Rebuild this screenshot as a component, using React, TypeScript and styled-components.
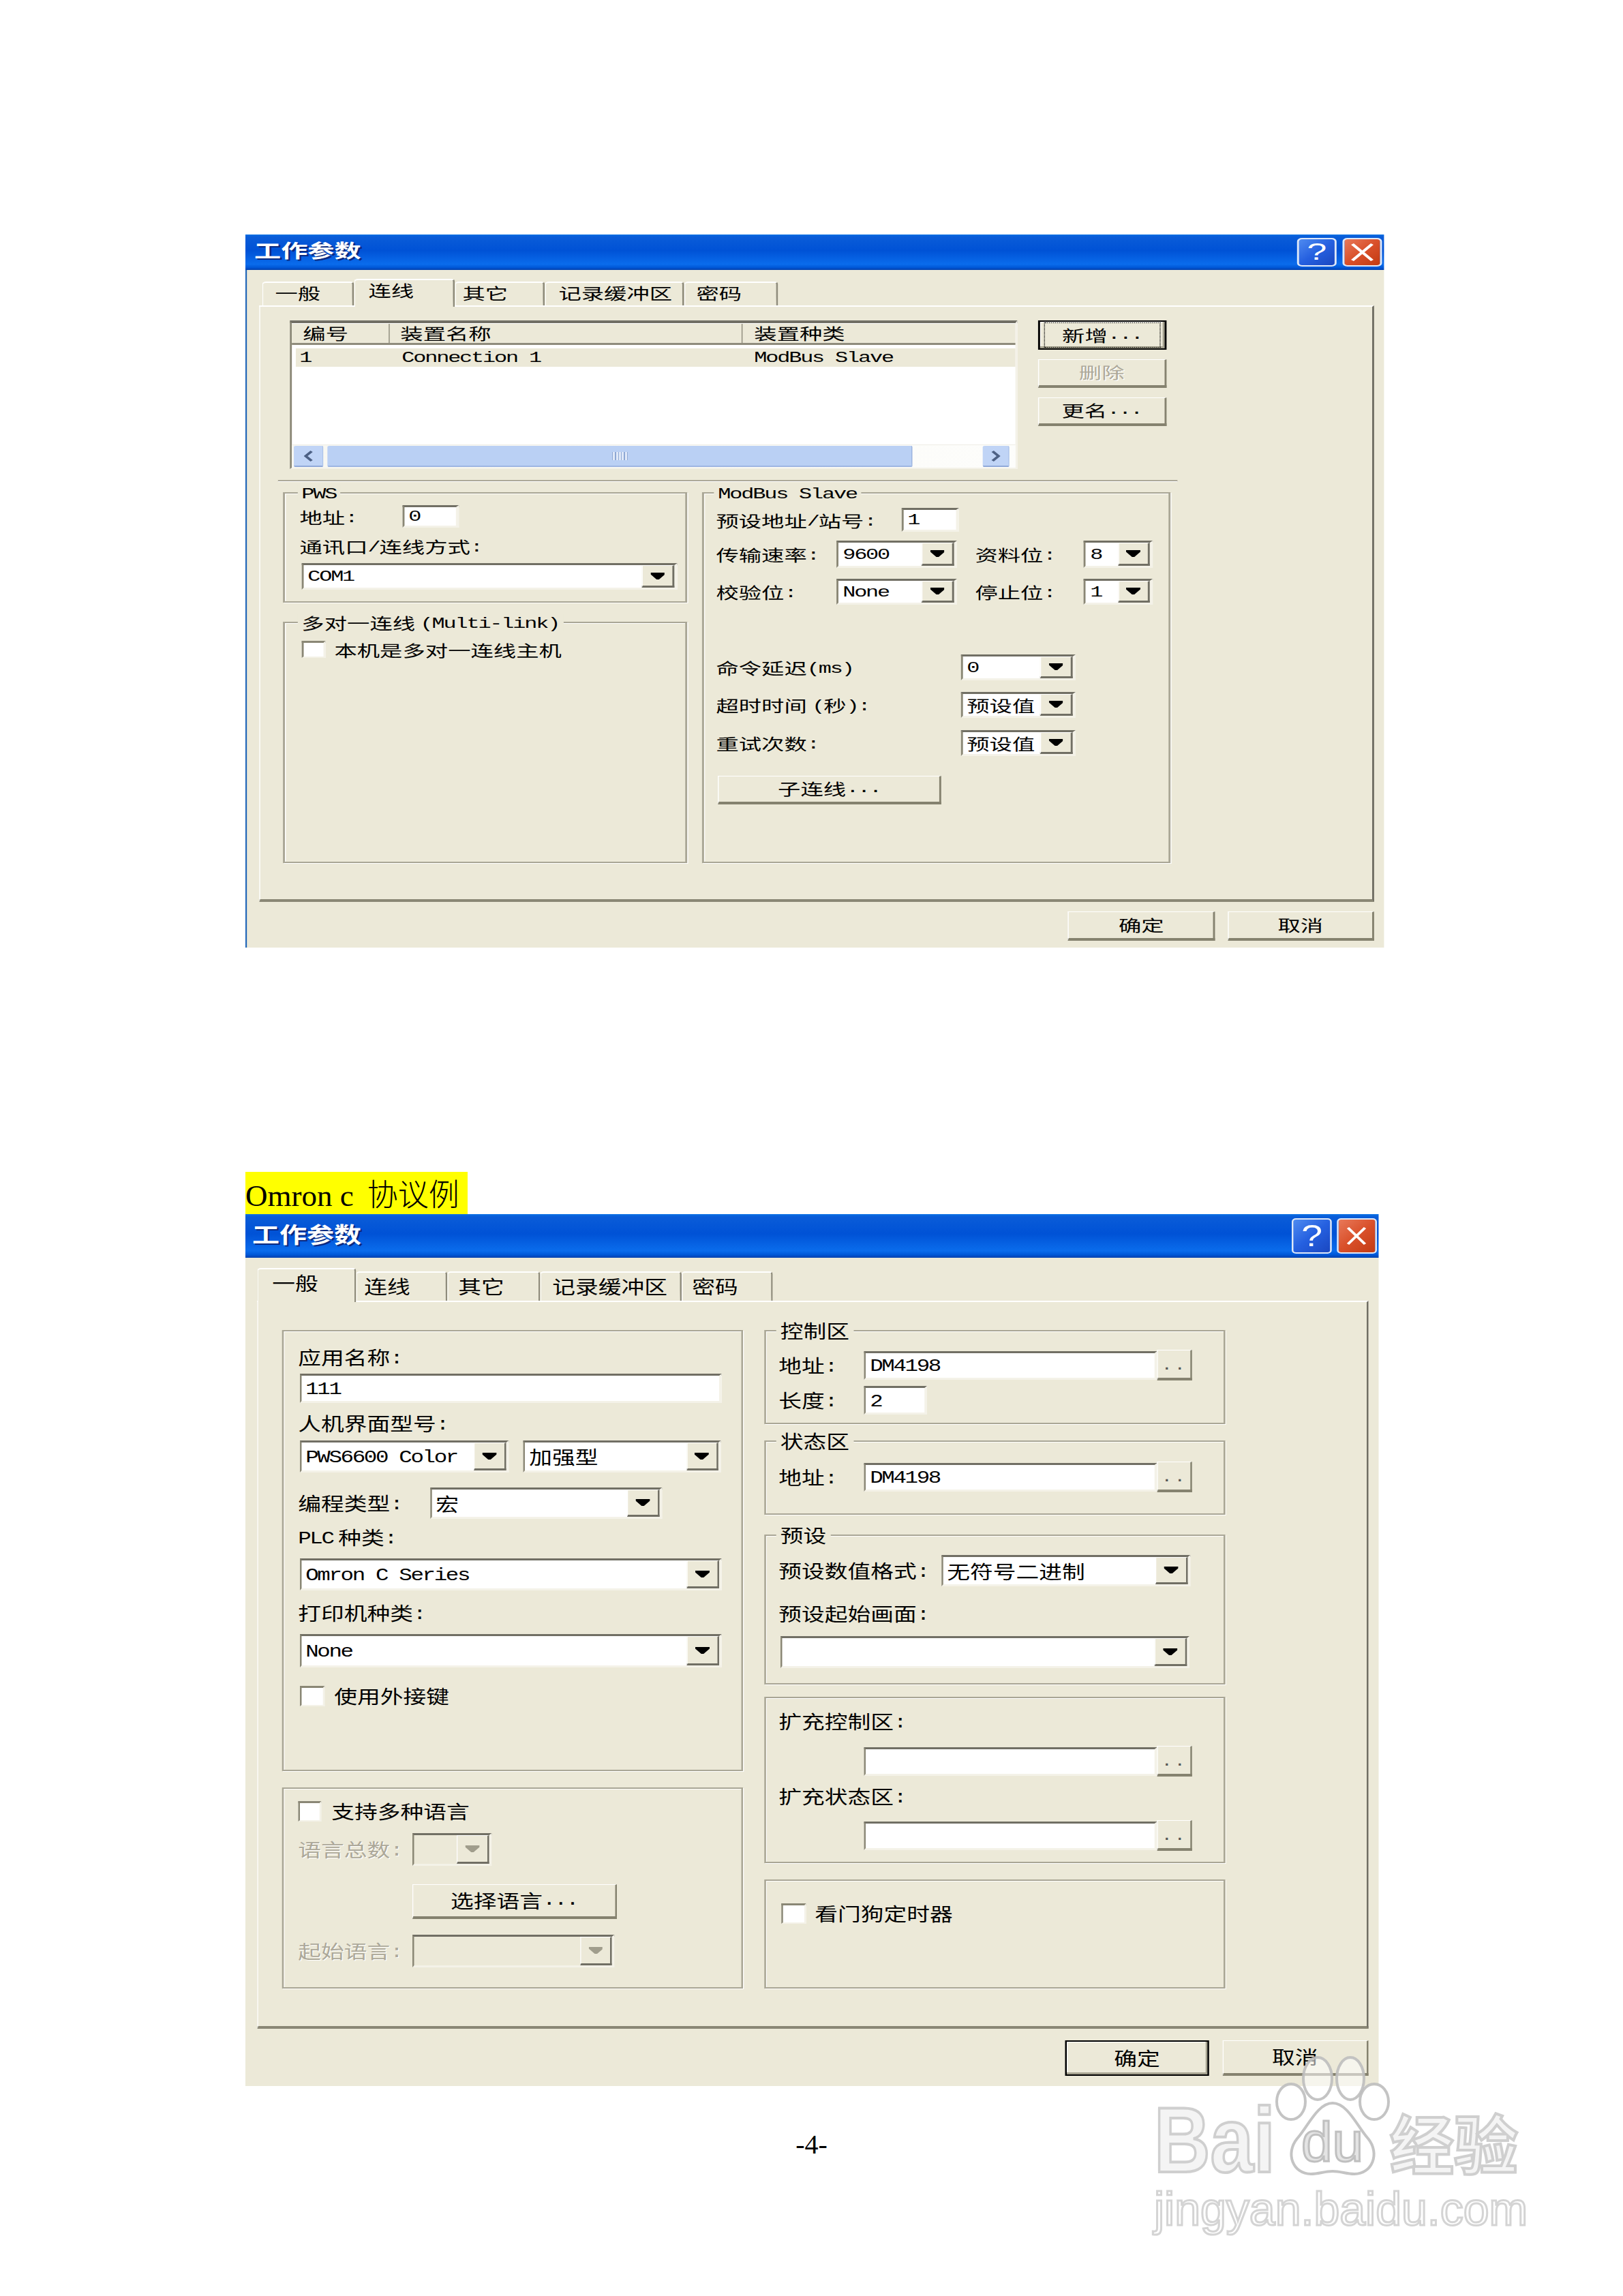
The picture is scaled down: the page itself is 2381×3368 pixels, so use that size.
import React, { FC, ReactNode } from 'react';
import styled, { createGlobalStyle, ThemeProvider } from 'styled-components';

// The two dialogs were pasted stretched: each is laid out at its own width and scaled in x.
// Every horizontal size below is given in page pixels and divided by theme.sx.
const hx = (px: number, theme: any) => `${px / theme.sx}px`;

const topDialog = { sx: 1.45, font: 23, latin: 22, track: -1.5, title: 27, legend: 24, tabTop: 3, titlePad: 13 };
const bottomDialog = { sx: 1.25, font: 27, latin: 26, track: -1.9, title: 32, legend: 30, tabTop: 6, titlePad: 10 };

const GlobalStyle = createGlobalStyle`
  html, body { margin: 0; padding: 0; background: #fff; }
  * { box-sizing: border-box; }
`;

const Page = styled.div`
  position: relative;
  width: 2381px;
  height: 3368px;
  padding-top: 344px;
  overflow: hidden;
  background: #fff;
`;

const DialogFrame = styled.div<{ $w: number }>`
  width: ${({ $w, theme }) => hx($w, theme)};
  margin-left: 360px;
  transform: scaleX(${({ theme }) => theme.sx});
  transform-origin: 0 0;
  color: #000;
  font-family: 'Noto Sans CJK SC', sans-serif;
  font-size: ${({ theme }) => theme.font}px;
  line-height: 1;
`;

const TitleBar = styled.div<{ $h: number; $gap: number }>`
  height: ${({ $h }) => $h}px;
  display: flex;
  align-items: center;
  gap: ${({ $gap, theme }) => hx($gap, theme)};
  padding: 0 ${({ theme }) => hx(2, theme)} 0 ${({ theme }) => hx(theme.titlePad, theme)};
  background: linear-gradient(
    180deg,
    #0a72e6 0%,
    #0a5cd8 6%,
    #0052d6 45%,
    #0a6cec 84%,
    #0058d8 93%,
    #0040ad 100%
  );
`;

const TitleText = styled.div`
  flex: 1;
  padding-bottom: 8px;
  color: #fff;
  font-size: ${({ theme }) => theme.title}px;
  font-weight: 700;
  text-shadow: 2px 2px 0 #0b2a80;
`;

const CaptionButton = styled.div<{ $w: number; $h: number; $close?: boolean }>`
  width: ${({ $w, theme }) => hx($w, theme)};
  height: ${({ $h }) => $h}px;
  display: flex;
  align-items: center;
  justify-content: center;
  border: 2px solid #dfe8f8;
  border-radius: 5px;
  color: #fff;
  font-family: 'Liberation Sans', sans-serif;
  font-size: ${({ $h }) => $h * 0.85}px;
  background: ${({ $close }) =>
    $close
      ? 'linear-gradient(135deg, #e8795a 0%, #d9502a 50%, #c23a12 100%)'
      : 'linear-gradient(135deg, #4f8bf0 0%, #2560e0 50%, #1a47c0 100%)'};
`;

const Body = styled.div<{ $blue?: boolean; $pl: number; $pr: number; $pt: number }>`
  background: #ece9d8;
  padding: ${({ $pt }) => $pt}px ${({ $pr, theme }) => hx($pr, theme)} 0
    ${({ $pl, theme }) => hx($pl, theme)};
  ${({ $blue }) => ($blue ? 'box-shadow: inset 1.5px 0 0 #1f66b8;' : '')}
`;

const TabStrip = styled.div<{ $h: number; $ml: number }>`
  height: ${({ $h }) => $h}px;
  display: flex;
  align-items: flex-end;
  margin-left: ${({ $ml, theme }) => hx($ml, theme)};
`;

const Tab = styled.div<{ $w: number; $pl: number; $active?: boolean; $h: number }>`
  position: relative;
  z-index: ${({ $active }) => ($active ? 1 : 0)};
  width: ${({ $w, theme }) => hx($w, theme)};
  height: ${({ $h }) => $h}px;
  margin-bottom: ${({ $active }) => ($active ? -2 : 0)}px;
  padding-left: ${({ $pl, theme }) => hx($pl, theme)};
  padding-top: ${({ theme }) => theme.tabTop}px;
  background: #ece9d8;
  border-style: solid;
  border-width: 2px 2px 0 1px;
  border-color: #fff #8f8c7c #fff #fff;
  border-radius: 4px 4px 0 0;
  white-space: nowrap;
`;

const TabPane = styled.div<{ $h: number; $pt: number; $pl: number }>`
  height: ${({ $h }) => $h}px;
  padding: ${({ $pt }) => $pt}px 0 0 ${({ $pl, theme }) => hx($pl, theme)};
  border-style: solid;
  border-width: 2px 2px 4px 1px;
  border-color: #fff #716f64 #8a8775 #fff;
`;

const Row = styled.div<{ $mt?: number; $ml?: number; $gap?: number; $h?: number; $top?: boolean }>`
  display: flex;
  align-items: ${({ $top }) => ($top ? 'flex-start' : 'center')};
  margin-top: ${({ $mt }) => $mt || 0}px;
  margin-left: ${({ $ml, theme }) => hx($ml || 0, theme)};
  gap: ${({ $gap, theme }) => hx($gap || 0, theme)};
  ${({ $h }) => ($h ? `height: ${$h}px;` : '')}
`;

const Column = styled.div<{ $gap?: number; $w?: number }>`
  display: flex;
  flex-direction: column;
  gap: ${({ $gap }) => $gap || 0}px;
  ${({ $w, theme }) => ($w ? `width: ${hx($w, theme)};` : '')}
`;

const Separator = styled.div<{ $mt: number; $ml: number; $w: number }>`
  width: ${({ $w, theme }) => hx($w, theme)};
  height: 3px;
  margin: ${({ $mt }) => $mt}px 0 0 ${({ $ml, theme }) => hx($ml, theme)};
  background: #aca899;
  border-bottom: 1px solid #fff;
`;

const Group = styled.div<{ $w: number; $h: number; $pl: number; $mt?: number }>`
  width: ${({ $w, theme }) => hx($w, theme)};
  height: ${({ $h }) => $h}px;
  margin-top: ${({ $mt }) => $mt || 0}px;
  padding-left: ${({ $pl, theme }) => hx($pl, theme)};
  border: 2px solid #a9a695;
  box-shadow: 1px 1px 0 #fff, inset 1px 1px 0 #fff;
`;

const Legend = styled.div`
  width: fit-content;
  height: ${({ theme }) => theme.legend}px;
  line-height: ${({ theme }) => theme.legend}px;
  margin-top: ${({ theme }) => -(theme.legend / 2 + 1)}px;
  margin-left: ${({ theme }) => hx(-6, theme)};
  padding: 0 ${({ theme }) => hx(6, theme)};
  background: #ece9d8;
  white-space: nowrap;
`;

const Latin = styled.span`
  font-family: 'Liberation Mono', monospace;
  font-size: ${({ theme }) => theme.latin}px;
  letter-spacing: ${({ theme }) => theme.track}px;
  vertical-align: 2px;
`;

const Colon = <Latin>:</Latin>;

const Label = styled.div<{ $w?: number; $off?: boolean; $mt?: number }>`
  ${({ $w, theme }) => ($w ? `width: ${hx($w, theme)};` : '')}
  flex-shrink: 0;
  height: ${({ theme }) => theme.legend}px;
  line-height: ${({ theme }) => theme.legend}px;
  margin-top: ${({ $mt }) => $mt || 0}px;
  text-indent: -2px;
  white-space: nowrap;
  ${({ $off }) => ($off ? 'color: #aca899; text-shadow: 1px 1px 0 #fff;' : '')}
`;

const Sunken = styled.div<{ $w: number; $h: number; $off?: boolean }>`
  width: ${({ $w, theme }) => hx($w, theme)};
  height: ${({ $h }) => $h}px;
  flex-shrink: 0;
  display: flex;
  align-items: center;
  background: ${({ $off }) => ($off ? '#ece9d8' : '#fff')};
  border-style: solid;
  border-width: 3px 3px 3px 2px;
  border-color: #716f64 #f4f2e8 #f4f2e8 #8a8775;
`;

const FieldValue = styled.div`
  flex: 1;
  padding-left: ${({ theme }) => hx(6, theme)};
  white-space: nowrap;
`;

const ComboArrow = styled.div<{ $off?: boolean }>`
  width: ${({ theme }) => hx(47, theme)};
  height: 100%;
  flex-shrink: 0;
  display: flex;
  align-items: center;
  justify-content: center;
  background: #ece9d8;
  border-style: solid;
  border-width: 1px 2px 3px 1px;
  border-color: #fff #716f64 #716f64 #fff;
  color: ${({ $off }) => ($off ? '#a09d8c' : '#000')};
`;

const ArrowSvg = styled.svg`
  width: ${({ theme }) => hx(21, theme)};
  height: 10px;
`;

const Raised = styled.div<{ $w: number; $h: number; $default?: boolean; $off?: boolean }>`
  width: ${({ $w, theme }) => hx($w, theme)};
  height: ${({ $h }) => $h}px;
  flex-shrink: 0;
  display: flex;
  align-items: center;
  justify-content: center;
  padding-bottom: 2px;
  background: #ece9d8;
  white-space: nowrap;
  border-style: solid;
  ${({ $default }) =>
    $default
      ? 'border-width: 2px; border-color: #000; box-shadow: inset -2px -3px 0 #a5a28f, inset 1px 1px 0 #fff;'
      : 'border-width: 1px 2px 4px 1px; border-color: #fff #85826f #85826f #fff;'}
  ${({ $off }) => ($off ? 'color: #aca899; text-shadow: 1px 1px 0 #fff;' : '')}
`;

const FocusRing = styled.div`
  width: 100%;
  height: 100%;
  margin: 3px 4px 1px;
  display: flex;
  align-items: center;
  justify-content: center;
  border: 1px dotted #000;
`;

const BrowseDots = styled.span`
  align-self: flex-end;
  margin-bottom: 4px;
  color: #555;
  letter-spacing: 2px;
  font-family: 'Liberation Mono', monospace;
  font-size: ${({ theme }) => theme.latin - 4}px;
`;

const CheckBox = styled.div<{ $w: number; $h: number }>`
  width: ${({ $w, theme }) => hx($w, theme)};
  height: ${({ $h }) => $h}px;
  flex-shrink: 0;
  background: #fff;
  border-style: solid;
  border-width: 3px 2px 2px 2px;
  border-color: #8a8775 #f4f2e8 #f4f2e8 #8a8775;
`;

// list control of the first dialog
const ListBox = styled.div<{ $w: number; $h: number }>`
  width: ${({ $w, theme }) => hx($w, theme)};
  height: ${({ $h }) => $h}px;
  display: flex;
  flex-direction: column;
  background: #fff;
  border-style: solid;
  border-width: 4px 2px 2px 2px;
  border-color: #716f64 #f4f2e8 #f4f2e8 #8a8775;
`;

const ListHeader = styled.div`
  height: 32px;
  display: flex;
  background: #ece9d8;
  border-top: 1px solid #fff;
  border-bottom: 3px solid #8f8c7c;
`;

const HeaderCell = styled.div<{ $w?: number; $pl: number }>`
  ${({ $w, theme }) => ($w ? `width: ${hx($w, theme)};` : 'flex: 1;')}
  padding-left: ${({ $pl, theme }) => hx($pl, theme)};
  line-height: 27px;
  border-right: ${({ $w }) => ($w ? '1px solid #8f8c7c' : 'none')};
`;

const ListRow = styled.div`
  height: 27px;
  margin: 5px 0 0 ${({ theme }) => hx(6, theme)};
  display: flex;
  align-items: center;
  background: #ece9d8;
`;

const ListCell = styled.div<{ $w?: number; $pl: number }>`
  ${({ $w, theme }) => ($w ? `width: ${hx($w, theme)};` : 'flex: 1;')}
  padding-left: ${({ $pl, theme }) => hx($pl, theme)};
  white-space: nowrap;
`;

const ListFill = styled.div`
  flex: 1;
`;

const ScrollBar = styled.div`
  height: 34px;
  display: flex;
  align-items: center;
  gap: ${({ theme }) => hx(6, theme)};
  padding: 1px ${({ theme }) => hx(8, theme)} 1px ${({ theme }) => hx(3, theme)};
  background: linear-gradient(90deg, #f7f7f2, #fdfdfb);
  border-top: 1px solid #eeede5;
`;

const ScrollButton = styled.div<{ $w: number }>`
  width: ${({ $w, theme }) => hx($w, theme)};
  height: 100%;
  flex-shrink: 0;
  display: flex;
  align-items: center;
  justify-content: center;
  background: #c0d4f6;
  border-radius: 2px;
  border-bottom: 2px solid #8fa8d8;
  border-right: 1px solid #a8bfe8;
  color: #4d6185;
`;

const ScrollThumb = styled.div<{ $w: number }>`
  width: ${({ $w, theme }) => hx($w, theme)};
  height: 100%;
  display: flex;
  align-items: center;
  justify-content: center;
  background: #bad0f4;
  border-radius: 2px;
  border-right: 1px solid #8fa8d8;
  border-bottom: 2px solid #9db5e2;
`;

const ScrollGrip = styled.div`
  width: ${({ theme }) => hx(23, theme)};
  height: 12px;
  background: repeating-linear-gradient(90deg, #8ea8d4 0 1px, #dfe8f8 1px 3px);
`;

const Footer = styled.div<{ $h: number; $pt: number; $gap: number; $pr?: number }>`
  height: ${({ $h }) => $h}px;
  padding-top: ${({ $pt }) => $pt}px;
  padding-right: ${({ $pr, theme }) => hx($pr || 0, theme)};
  display: flex;
  justify-content: flex-end;
  gap: ${({ $gap, theme }) => hx($gap, theme)};
`;

// page text
const Caption = styled.div`
  width: 326px;
  height: 62px;
  margin: 329px 0 0 360px;
  background: #ffff00;
  color: #000;
  font-family: 'Liberation Serif', serif;
  font-size: 45px;
  line-height: 62px;
  white-space: nowrap;
`;

const CaptionCjk = styled.span`
  margin-left: 20px;
  font-family: 'Noto Sans CJK SC', sans-serif;
  font-size: 45px;
  font-weight: 300;
`;

const PageNumber = styled.div`
  margin-top: 63px;
  text-align: center;
  color: #000;
  font-family: 'Liberation Serif', serif;
  font-size: 40px;
  line-height: 46px;
`;

// baidu stamp, lies over the corner of the second dialog
const Stamp = styled.div`
  position: absolute;
  left: 1693px;
  top: 3015px;
  width: 545px;
  height: 260px;
  pointer-events: none;
`;

const StampPaw = styled.svg`
  position: absolute;
  left: 172px;
  top: 0;
`;

const StampBai = styled.div`
  position: absolute;
  left: 0;
  top: 56px;
  color: #f4f4f4;
  font-family: 'Liberation Sans', sans-serif;
  font-size: 136px;
  font-weight: 700;
  line-height: 136px;
  transform: scaleX(0.84);
  transform-origin: 0 0;
  -webkit-text-stroke: 4px #cfcfcf;
  text-shadow: 0 0 3px #bbb;
`;

const StampDu = styled.div`
  position: absolute;
  left: 216px;
  top: 86px;
  color: #e4e4e4;
  font-family: 'Liberation Sans', sans-serif;
  font-size: 82px;
  line-height: 82px;
  -webkit-text-stroke: 3px #c0c0c0;
`;

const StampCjk = styled.div`
  position: absolute;
  left: 346px;
  top: 74px;
  color: #f4f4f4;
  font-family: 'Noto Sans CJK SC', sans-serif;
  font-size: 94px;
  font-weight: 700;
  line-height: 104px;
  white-space: nowrap;
  -webkit-text-stroke: 4px #cfcfcf;
  text-shadow: 0 0 3px #bbb;
`;

const StampUrl = styled.div`
  position: absolute;
  left: 0;
  top: 186px;
  color: #fff;
  font-family: 'Liberation Sans', sans-serif;
  font-size: 68px;
  line-height: 78px;
  white-space: nowrap;
  -webkit-text-stroke: 3px #d4d4d4;
`;

const ArrowGlyph: FC = () => (
  <ArrowSvg viewBox="0 0 12 8" preserveAspectRatio="none">
    <path d="M0 0h12v2l-5 6H5L0 2z" fill="currentColor" />
  </ArrowSvg>
);

const Chevron: FC<{ right?: boolean }> = ({ right }) => (
  <svg width="10" height="18" viewBox="0 0 10 18">
    <path
      d={right ? 'M2 2l6 7-6 7' : 'M8 2L2 9l6 7'}
      fill="none"
      stroke="currentColor"
      strokeWidth="3"
    />
  </svg>
);

const CloseGlyph: FC = () => (
  <svg width="26" height="30" viewBox="0 0 26 30">
    <path d="M3 3l20 24M23 3L3 27" fill="none" stroke="#fff" strokeWidth="3.5" />
  </svg>
);

interface ComboProps {
  w: number;
  h: number;
  off?: boolean;
  children?: ReactNode;
}
const Combo: FC<ComboProps> = ({ w, h, off, children }) => (
  <Sunken $w={w} $h={h} $off={off}>
    <FieldValue>{children}</FieldValue>
    <ComboArrow $off={off}>
      <ArrowGlyph />
    </ComboArrow>
  </Sunken>
);

const TextBox: FC<{ w: number; h: number; value?: string }> = ({ w, h, value }) => (
  <Sunken $w={w} $h={h}>
    <FieldValue>
      <Latin>{value}</Latin>
    </FieldValue>
  </Sunken>
);

const BrowseField: FC<{ value?: string }> = ({ value }) => (
  <>
    <TextBox w={430} h={42} value={value} />
    <Raised $w={51} $h={45}>
      <BrowseDots>..</BrowseDots>
    </Raised>
  </>
);

const Titled: FC<{ h: number; gap: number; bw: number; bh: number }> = ({ h, gap, bw, bh }) => (
  <TitleBar $h={h} $gap={gap}>
    <TitleText>工作参数</TitleText>
    <CaptionButton $w={bw} $h={bh}>?</CaptionButton>
    <CaptionButton $w={bw} $h={bh} $close>
      <CloseGlyph />
    </CaptionButton>
  </TitleBar>
);

const ConnectionDialog: FC = () => (
  <ThemeProvider theme={topDialog}>
    <DialogFrame $w={1670}>
      <Titled h={52} gap={9} bw={58} bh={42} />
      <Body $blue $pl={20} $pr={14} $pt={12}>
        <TabStrip $h={40} $ml={4}>
          <Tab $w={135} $h={35} $pl={18}>一般</Tab>
          <Tab $w={148} $h={41} $pl={20} $active>连线</Tab>
          <Tab $w={133} $h={35} $pl={10}>其它</Tab>
          <Tab $w={204} $h={35} $pl={18}>记录缓冲区</Tab>
          <Tab $w={138} $h={35} $pl={16}>密码</Tab>
        </TabStrip>
        <TabPane $h={875} $pt={20} $pl={44}>
          <Row $top $gap={30}>
            <ListBox $w={1067} $h={218}>
              <ListHeader>
                <HeaderCell $w={144} $pl={16}>编号</HeaderCell>
                <HeaderCell $w={517} $pl={15}>装置名称</HeaderCell>
                <HeaderCell $pl={17}>装置种类</HeaderCell>
              </ListHeader>
              <ListRow>
                <ListCell $w={136} $pl={5}><Latin>1</Latin></ListCell>
                <ListCell $w={518} $pl={19}><Latin>Connection 1</Latin></ListCell>
                <ListCell $pl={18}><Latin>ModBus Slave</Latin></ListCell>
              </ListRow>
              <ListFill />
              <ScrollBar>
                <ScrollButton $w={43}><Chevron /></ScrollButton>
                <ScrollThumb $w={859}><ScrollGrip /></ScrollThumb>
                <ListFill />
                <ScrollButton $w={40}><Chevron right /></ScrollButton>
              </ScrollBar>
            </ListBox>
            <Column $gap={14}>
              <Raised $w={189} $h={43} $default>
                <FocusRing>新增<Latin>...</Latin></FocusRing>
              </Raised>
              <Raised $w={189} $h={42} $off>删除</Raised>
              <Raised $w={189} $h={42}>更名<Latin>...</Latin></Raised>
            </Column>
          </Row>
          <Separator $mt={16} $ml={-18} $w={1320} />
          <Row $top $mt={15} $ml={-10} $gap={22}>
            <Column $gap={28}>
              <Group $w={592} $h={162} $pl={24}>
                <Legend><Latin>PWS</Latin></Legend>
                <Row $mt={6}>
                  <Label $w={148}>地址{Colon}</Label>
                  <TextBox w={83} h={33} value="0" />
                </Row>
                <Label $mt={15}>通讯口<Latin>/</Latin>连线方式{Colon}</Label>
                <Row $mt={13}>
                  <Combo w={551} h={39}><Latin>COM1</Latin></Combo>
                </Row>
              </Group>
              <Group $w={592} $h={354} $pl={24}>
                <Legend>多对一连线 <Latin>(Multi-link)</Latin></Legend>
                <Row $mt={15} $gap={16}>
                  <CheckBox $w={35} $h={25} />
                  <Label>本机是多对一连线主机</Label>
                </Row>
              </Group>
            </Column>
            <Group $w={688} $h={544} $pl={21}>
              <Legend><Latin>ModBus Slave</Latin></Legend>
              <Row $mt={10}>
                <Label $w={269}>预设地址<Latin>/</Latin>站号{Colon}</Label>
                <TextBox w={84} h={35} value="1" />
              </Row>
              <Row $mt={13}>
                <Label $w={174}>传输速率{Colon}</Label>
                <Combo w={176} h={40}><Latin>9600</Latin></Combo>
                <Row $ml={30}>
                  <Label $w={157}>资料位{Colon}</Label>
                  <Combo w={101} h={40}><Latin>8</Latin></Combo>
                </Row>
              </Row>
              <Row $mt={16}>
                <Label $w={174}>校验位{Colon}</Label>
                <Combo w={176} h={38}><Latin>None</Latin></Combo>
                <Row $ml={30}>
                  <Label $w={157}>停止位{Colon}</Label>
                  <Combo w={101} h={38}><Latin>1</Latin></Combo>
                </Row>
              </Row>
              <Row $mt={73}>
                <Label $w={356}>命令延迟<Latin>(ms)</Latin></Label>
                <Combo w={168} h={38}><Latin>0</Latin></Combo>
              </Row>
              <Row $mt={17}>
                <Label $w={356}>超时时间 <Latin>(</Latin>秒<Latin>)</Latin>{Colon}</Label>
                <Combo w={168} h={38}>预设值</Combo>
              </Row>
              <Row $mt={18}>
                <Label $w={356}>重试次数{Colon}</Label>
                <Combo w={168} h={38}>预设值</Combo>
              </Row>
              <Row $mt={29}>
                <Raised $w={328} $h={42}>子连线<Latin>...</Latin></Raised>
              </Row>
            </Group>
          </Row>
        </TabPane>
        <Footer $h={67} $pt={14} $gap={18}>
          <Raised $w={216} $h={43}>确定</Raised>
          <Raised $w={215} $h={43}>取消</Raised>
        </Footer>
      </Body>
    </DialogFrame>
  </ThemeProvider>
);

const GeneralDialog: FC = () => (
  <ThemeProvider theme={bottomDialog}>
    <DialogFrame $w={1662}>
      <Titled h={64} gap={7} bw={59} bh={52} />
      <Body $pl={17} $pr={15} $pt={15}>
        <TabStrip $h={48} $ml={1}>
          <Tab $w={145} $h={50} $pl={20} $active>一般</Tab>
          <Tab $w={133} $h={43} $pl={10}>连线</Tab>
          <Tab $w={137} $h={43} $pl={15}>其它</Tab>
          <Tab $w={207} $h={43} $pl={16}>记录缓冲区</Tab>
          <Tab $w={134} $h={43} $pl={14}>密码</Tab>
        </TabStrip>
        <TabPane $h={1068} $pt={41} $pl={36}>
          <Row $top $gap={31}>
            <Column $gap={24}>
              <Group $w={676} $h={647} $pl={23}>
                <Label $mt={23}>应用名称{Colon}</Label>
                <Row $mt={9}>
                  <TextBox w={619} h={43} value="111" />
                </Row>
                <Label $mt={15}>人机界面型号{Colon}</Label>
                <Row $mt={10} $gap={22}>
                  <Combo w={306} h={47}><Latin>PWS6600 Color</Latin></Combo>
                  <Combo w={290} h={47}>加强型</Combo>
                </Row>
                <Row $mt={22}>
                  <Label $w={191}>编程类型{Colon}</Label>
                  <Combo w={340} h={46}>宏</Combo>
                </Row>
                <Label $mt={12}><Latin>PLC</Latin> 种类{Colon}</Label>
                <Row $mt={16}>
                  <Combo w={619} h={47}><Latin>Omron C Series</Latin></Combo>
                </Row>
                <Label $mt={18}>打印机种类{Colon}</Label>
                <Row $mt={16}>
                  <Combo w={619} h={49}><Latin>None</Latin></Combo>
                </Row>
                <Row $mt={27} $gap={17}>
                  <CheckBox $w={36} $h={30} />
                  <Label>使用外接键</Label>
                </Row>
              </Group>
              <Group $w={676} $h={295} $pl={21}>
                <Row $mt={18} $gap={17}>
                  <CheckBox $w={34} $h={30} />
                  <Label>支持多种语言</Label>
                </Row>
                <Row $mt={17} $ml={2}>
                  <Label $w={165} $off>语言总数{Colon}</Label>
                  <Combo w={116} h={48} off />
                </Row>
                <Row $mt={27} $ml={167}>
                  <Raised $w={300} $h={51}>选择语言<Latin>...</Latin></Raised>
                </Row>
                <Row $mt={23} $ml={2}>
                  <Label $w={165} $off>起始语言{Colon}</Label>
                  <Combo w={297} h={48} off />
                </Row>
              </Group>
            </Column>
            <Column>
              <Group $w={676} $h={138} $pl={21}>
                <Legend>控制区</Legend>
                <Row $mt={13}>
                  <Label $w={123}>地址{Colon}</Label>
                  <BrowseField value="DM4198" />
                </Row>
                <Row $mt={8}>
                  <Label $w={123}>长度{Colon}</Label>
                  <TextBox w={92} h={42} value="2" />
                </Row>
              </Group>
              <Group $w={676} $h={109} $pl={21} $mt={24}>
                <Legend>状态区</Legend>
                <Row $mt={15}>
                  <Label $w={123}>地址{Colon}</Label>
                  <BrowseField value="DM4198" />
                </Row>
              </Group>
              <Group $w={676} $h={220} $pl={21} $mt={29}>
                <Legend>预设</Legend>
                <Row $mt={14}>
                  <Label $w={236}>预设数值格式{Colon}</Label>
                  <Combo w={365} h={46}>无符号二进制</Combo>
                </Row>
                <Label $mt={25}>预设起始画面{Colon}</Label>
                <Row $mt={18}>
                  <Combo w={600} h={47} />
                </Row>
              </Group>
              <Group $w={676} $h={244} $pl={21} $mt={18}>
                <Label $mt={19}>扩充控制区{Colon}</Label>
                <Row $mt={21} $ml={123}>
                  <BrowseField />
                </Row>
                <Label $mt={14}>扩充状态区{Colon}</Label>
                <Row $mt={20} $ml={123}>
                  <BrowseField />
                </Row>
              </Group>
              <Group $w={676} $h={160} $pl={22} $mt={24}>
                <Row $mt={33} $gap={15}>
                  <CheckBox $w={37} $h={30} />
                  <Label>看门狗定时器</Label>
                </Row>
              </Group>
            </Column>
          </Row>
        </TabPane>
        <Footer $h={84} $pt={17} $gap={20} $pr={-2}>
          <Raised $w={212} $h={52} $default>确定</Raised>
          <Raised $w={213} $h={52}>取消</Raised>
        </Footer>
      </Body>
    </DialogFrame>
  </ThemeProvider>
);

const BaiduStamp: FC = () => (
  <Stamp>
    <StampBai>Bai</StampBai>
    <StampPaw width="180" height="178" viewBox="0 0 180 178">
      <g fill="rgba(255,255,255,0.55)" stroke="rgba(190,190,190,0.9)" strokeWidth="4">
        <ellipse cx="68" cy="34" rx="21" ry="31" />
        <ellipse cx="116" cy="34" rx="20" ry="31" />
        <ellipse cx="29" cy="68" rx="21" ry="26" />
        <ellipse cx="151" cy="68" rx="21" ry="26" />
        <path d="M90 70c-22 0-36 34-52 52-18 22-6 52 20 52 12 0 20-4 32-4s20 4 32 4c26 0 38-30 20-52-16-18-30-52-52-52z" />
      </g>
    </StampPaw>
    <StampDu>du</StampDu>
    <StampCjk>经验</StampCjk>
    <StampUrl>jingyan.baidu.com</StampUrl>
  </Stamp>
);

const App: FC = () => (
  <Page>
    <GlobalStyle />
    <ConnectionDialog />
    <Caption>
      Omron c<CaptionCjk>协议例</CaptionCjk>
    </Caption>
    <GeneralDialog />
    <PageNumber>-4-</PageNumber>
    <BaiduStamp />
  </Page>
);

export default App;
